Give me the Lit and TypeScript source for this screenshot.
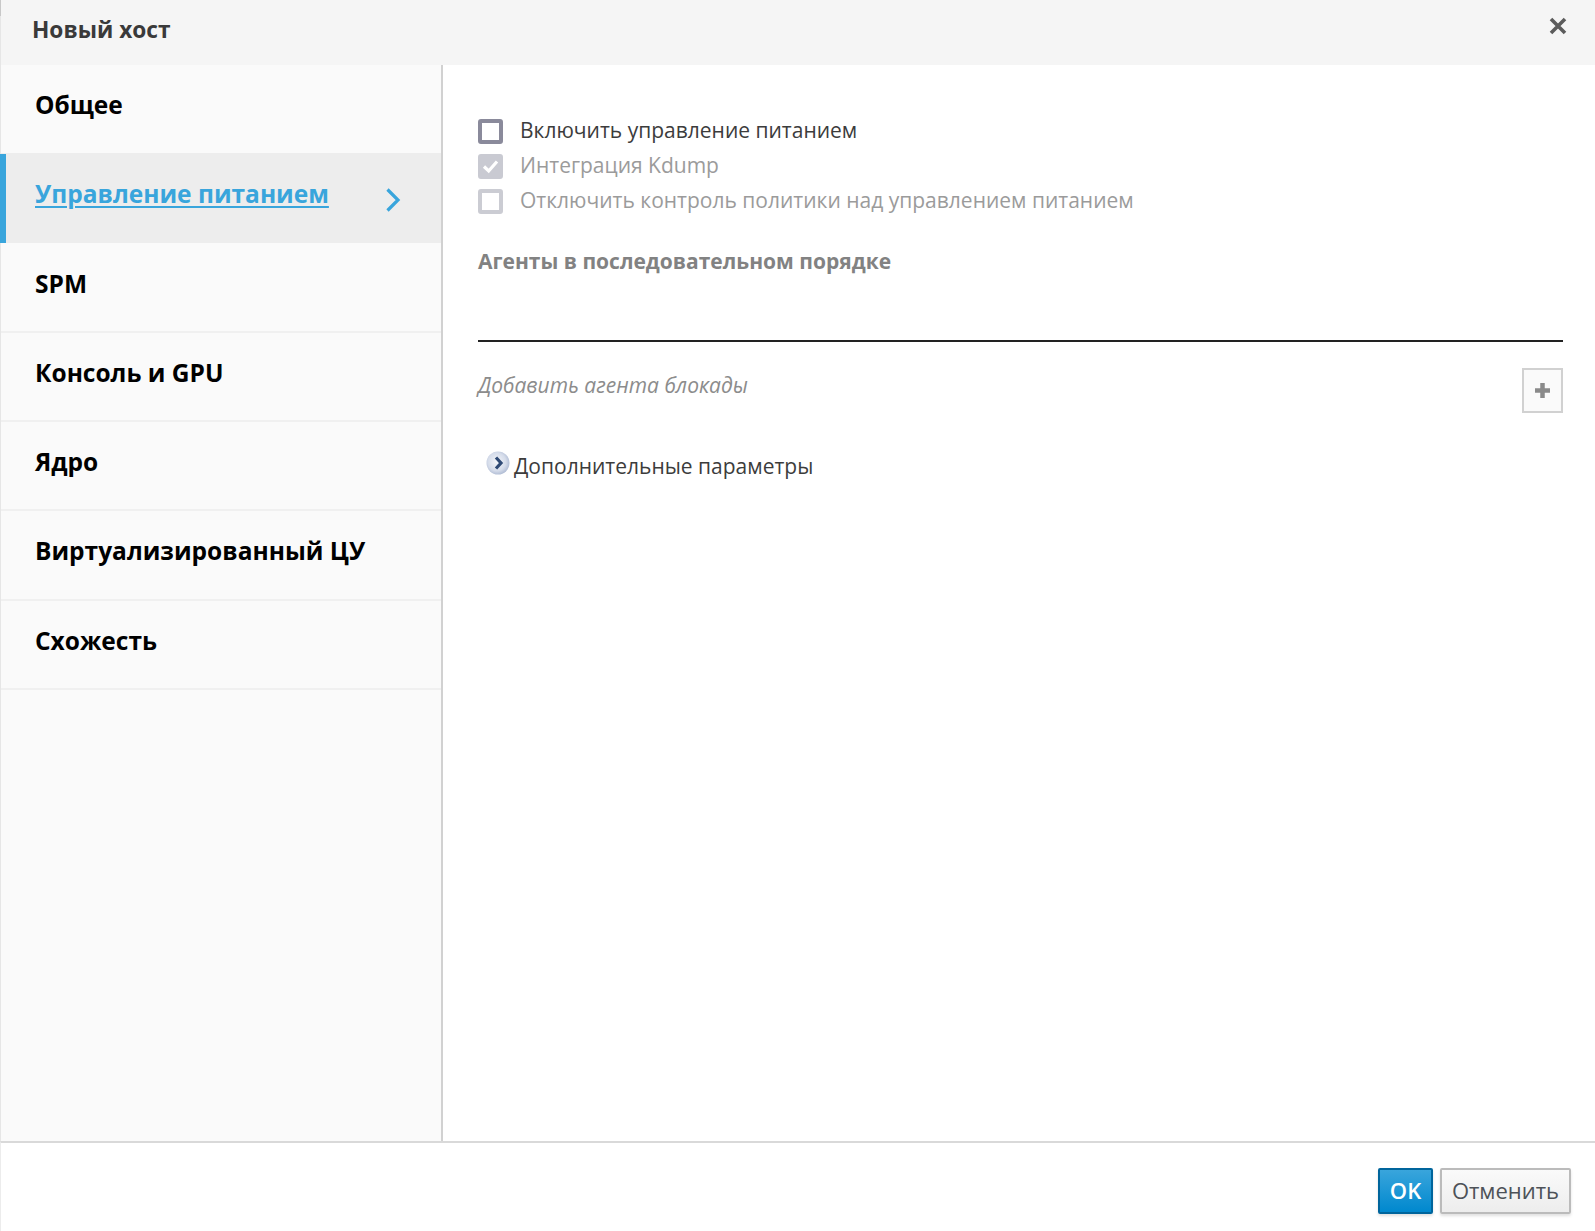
import { LitElement, html, css } from "lit";
import { customElement } from "lit/decorators.js";

const NAV = ["Общее", "Управление питанием", "SPM", "Консоль и GPU", "Ядро", "Виртуализированный ЦУ", "Схожесть"];

@customElement("app-root")
export class AppRoot extends LitElement {
  static styles = css`
    :host { display: block; width: 1595px; height: 1231px; overflow: hidden; background: #fff; font-family: "Open Sans", sans-serif; color: #333; }
    .dialog { height: 1231px; display: flex; flex-direction: column; border-left: 1px solid #e6e6e6; box-sizing: border-box; position: relative; }
    .dialog::before { content: ""; position: absolute; left: -1px; top: 0; width: 1px; height: 16px; background: #c8c8c8; }
    .head { height: 65px; flex: none; background: #f5f5f5; display: flex; justify-content: space-between; box-sizing: border-box; padding: 0 27px 0 31px; }
    .title { font-size: 22.7px; font-weight: 700; line-height: 59px; color: #3a3a3a; }
    .close { margin-top: 16px; width: 20px; height: 20px; }
    .body { flex: 1; display: flex; min-height: 0; }
    nav { width: 440px; flex: none; background: #fafafa; border-right: 2px solid #d1d1d1; box-sizing: content-box; }
    .item { height: 89.2px; box-sizing: border-box; border-bottom: 2px solid #f0f0f0; padding: 23px 0 0 34px; font-size: 24.5px; font-weight: 700; color: #000; line-height: 34px; position: relative; }
    .item:first-child { height: 88px; border-bottom: 0; padding-top: 23px; }
    .item:nth-child(3) { height: 90px; padding-top: 24px; }
    .item.active { height: 90px; background: #ededed; border-bottom: 0; color: #39a5dc; padding-top: 24px; }
    .item.active span { text-decoration: underline; text-decoration-thickness: 2px; text-underline-offset: 3px; }
    .item.active::before { content: ""; position: absolute; left: -1px; top: 1px; bottom: 0; width: 5.7px; background: #39a5dc; }
    .chev { position: absolute; left: 384px; top: 34px; width: 16px; height: 26px; }
    main { flex: 1; min-width: 0; padding: 49px 32px 0 35px; }
    .check { height: 35px; display: flex; align-items: center; gap: 17px; font-size: 21px; color: #3c3c3c; }
    .check span.t { padding-bottom: 3px; }
    .check.off { color: #9b9b9b; }
    .box { width: 25px; height: 25px; flex: none; box-sizing: border-box; border: 4px solid #8a8a9b; border-radius: 3px; background: #fff; display: flex; }
    .box.dim { border-color: #cbccd3; }
    .box.on { background: #c9cad2; border-color: #c9cad2; }
    .box svg { width: 17px; height: 17px; }
    .label { margin-top: 27px; font-size: 21px; font-weight: 700; color: #828282; line-height: 30px; }
    .rule { height: 2px; background: #222; margin-top: 64px; }
    .add { display: flex; justify-content: space-between; margin-top: 26px; }
    .add em { font-size: 21px; color: #8c8c8c; line-height: 34px; }
    .plus { width: 41px; height: 45px; box-sizing: border-box; border: 2px solid #d1d1d1; background: #fafafa; display: flex; align-items: center; justify-content: center; }
    .plus svg { width: 17px; height: 17px; }
    .more { display: flex; align-items: center; gap: 4px; margin: 37px 0 0 8px; font-size: 21px; color: #3c3c3c; line-height: 32px; }
    .more svg { width: 24px; height: 24px; margin-top: -6px; }
    .foot { height: 90px; flex: none; border-top: 2px solid #d9d9d9; margin-left: -1px; border-left: 1px solid #ececec; background: #fff; display: flex; justify-content: flex-end; gap: 7px; padding: 25px 24px 0 0; box-sizing: border-box; }
    .btn { height: 46px; box-sizing: border-box; font-size: 22px; line-height: 40px; text-align: center; box-shadow: 0 2px 3px rgba(0,0,0,.12); }
    .ok { width: 55px; font-weight: 600; color: #fff; background: linear-gradient(#39a5dc, #0088ce); border: 2px solid #00659c; border-radius: 2px; }
    .cancel { width: 131px; color: #4d5258; background: linear-gradient(#fafafa, #ededed); border: 2px solid #bbb; border-radius: 2px; }
  `;

  render() {
    return html`<div class="dialog">
      <header class="head">
        <div class="title">Новый хост</div>
        <svg class="close" viewBox="0 0 20 20"><path d="M3 3 17 17M17 3 3 17" stroke="#5c5c5c" stroke-width="3.6" fill="none"/></svg>
      </header>
      <div class="body">
        <nav>
          ${NAV.map((n, i) => i === 1
            ? html`<div class="item active"><span>${n}</span>
                <svg class="chev" viewBox="0 0 16 26"><path d="M2.5 2.5 13 13 2.5 23.5" stroke="#39a5dc" stroke-width="3.2" fill="none"/></svg></div>`
            : html`<div class="item">${n}</div>`)}
        </nav>
        <main>
          <div class="check"><span class="box"></span><span class="t">Включить управление питанием</span></div>
          <div class="check off"><span class="box on"><svg viewBox="0 0 17 17"><path d="M2 8.5 6.7 13 15 3.5" stroke="#fff" stroke-width="3.2" fill="none"/></svg></span><span class="t">Интеграция Kdump</span></div>
          <div class="check off"><span class="box dim"></span><span class="t">Отключить контроль политики над управлением питанием</span></div>
          <div class="label">Агенты в последовательном порядке</div>
          <div class="rule"></div>
          <div class="add"><em>Добавить агента блокады</em>
            <div class="plus"><svg viewBox="0 0 17 17"><path d="M8.5 1v15M1 8.5h15" stroke="#8a8a8a" stroke-width="4.5" fill="none"/></svg></div>
          </div>
          <div class="more">
            <svg viewBox="0 0 24 24">
              <defs><radialGradient id="g" cx="45%" cy="45%" r="60%"><stop offset="0" stop-color="#f4f6fa"/><stop offset=".65" stop-color="#d5dcea"/><stop offset="1" stop-color="#a9b6d0"/></radialGradient></defs>
              <circle cx="12" cy="12" r="11.5" fill="url(#g)"/>
              <path d="M10 6.5 15 12 10 17.5" stroke="#2f4a75" stroke-width="3.2" fill="none"/>
            </svg>
            <span>Дополнительные параметры</span>
          </div>
        </main>
      </div>
      <footer class="foot">
        <div class="btn ok">OK</div>
        <div class="btn cancel">Отменить</div>
      </footer>
    </div>`;
  }
}
